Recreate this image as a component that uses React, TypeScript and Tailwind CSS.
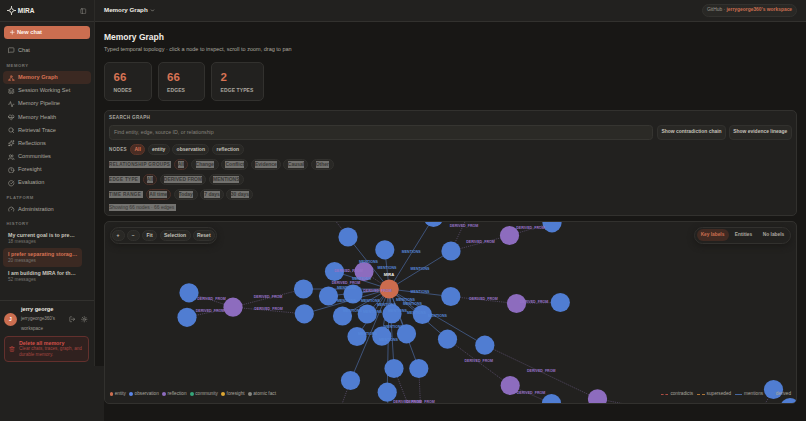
import React from "react";
import {
  Activity, ChevronDown, CircleCheckBig, Clock, Gauge, HeartPulse, Layers, LogOut,
  MessageSquare, PanelLeft, Plus, Search, Sparkles, Sun, Trash2, Users,
} from "lucide-react";

type Pt = [number, number];

function GraphIcon({ className }: { className?: string; strokeWidth?: number }) {
  return (
    <svg viewBox="0 0 24 24" className={className} fill="none" stroke="currentColor" strokeWidth="2.2" strokeLinecap="round">
      <circle cx="12" cy="5" r="3" />
      <circle cx="5" cy="19" r="3" />
      <circle cx="19" cy="19" r="3" />
      <path d="M10.7 8 6.5 16M13.3 8l4.2 8" />
    </svg>
  );
}

const memoryItems = [
  { icon: GraphIcon, label: "Memory Graph", active: true },
  { icon: Layers, label: "Session Working Set" },
  { icon: Activity, label: "Memory Pipeline" },
  { icon: HeartPulse, label: "Memory Health" },
  { icon: Search, label: "Retrieval Trace" },
  { icon: Sparkles, label: "Reflections" },
  { icon: Users, label: "Communities" },
  { icon: Clock, label: "Foresight" },
  { icon: CircleCheckBig, label: "Evaluation" },
];

const history = [
  { title: "My current goal is to pre…", sub: "18 messages" },
  { title: "I prefer separating storag…", sub: "20 messages", active: true },
  { title: "I am building MIRA for th…", sub: "52 messages" },
];

const hub: Pt = [388.7, 288.5];
const blue: Pt[] = [
  [188.5, 292.3], [186.5, 316.8], [347.5, 236.5], [334, 271], [303, 288.5], [303.8, 313.3],
  [328, 295.5], [352.5, 293.5], [384.3, 249.3], [433, 217], [450.5, 250.5], [450.3, 296],
  [342, 315.5], [366.7, 313.5], [391.5, 313.2], [421.8, 314], [356.5, 336], [381.3, 335.7],
  [406, 333.3], [447, 338.7], [484.3, 344.7], [350, 380], [393.5, 368], [418.3, 368],
  [386.7, 391.7], [551.5, 222.3], [559.8, 302], [551, 403], [773, 389], [789.5, 407],
];
const purple: Pt[] = [[363.5, 271], [232.5, 306.7], [509, 235], [516, 303], [509.7, 385], [597, 398.3]];

const derived: [Pt, Pt][] = [
  [[188.5, 292.3], [232.5, 306.7]], [[186.5, 316.8], [232.5, 306.7]],
  [[232.5, 306.7], [303, 288.5]], [[232.5, 306.7], [303.8, 313.3]],
  [[450.5, 250.5], [509, 235]], [[509, 235], [551.5, 222.3]], [[450.5, 250.5], [467, 216]],
  [[450.3, 296], [516, 303]], [[516, 303], [559.8, 302]],
  [[447, 338.7], [509.7, 385]], [[484.3, 344.7], [597, 398.3]], [[509.7, 385], [551, 403]],
  [[597, 398.3], [632, 405]], [[393.5, 368], [408, 405]], [[418.3, 368], [420, 405]],
  [[350, 380], [341, 405]], [[347.5, 236.5], [334, 219]], [[773, 389], [763, 406]],
  [[334, 271], [363.5, 271]], [[352.5, 293.5], [363.5, 271]], [[363.5, 271], [388.7, 288.5]],
];

const derivedLabels: Pt[] = [
  [211, 298], [209.5, 310.5], [267.5, 296.3], [268, 308.7], [463.5, 225.9], [480, 241.2],
  [530, 227.2], [483, 298], [533.5, 301], [478.3, 360.5], [540.7, 370.2], [530.5, 392.5],
  [407, 401.3], [420, 401.3], [345.5, 282.5], [348, 270], [377, 290.7],
];
const mentionLabels: Pt[] = [
  [410.7, 251.4], [419.5, 268], [419.5, 291.2], [386.5, 267.5], [368, 261.7], [361, 278.7],
  [346, 287.7], [370, 300.7], [405, 299.7], [412, 303], [437, 315.4], [386, 304.8], [397, 310.2],
  [372, 311.2], [416, 312.3], [346, 300], [393, 326.7], [367, 333.2], [388, 339], [352, 310.7],
];

function Graph() {
  return (
    <svg className="absolute inset-0 h-full w-full" viewBox="104.5 221.5 691 181" preserveAspectRatio="none">
      <g stroke="#4a68a0" strokeWidth="0.7">
        {blue.slice(2, 25).map(([x, y], i) => (
          <line key={i} x1={hub[0]} y1={hub[1]} x2={x} y2={y} />
        ))}
        <line x1="386.7" y1="391.7" x2="387.4" y2="404" />
      </g>
      <g stroke="#65567c" strokeWidth="0.65" strokeDasharray="1.2 1">
        {derived.map(([a, b], i) => (
          <line key={i} x1={a[0]} y1={a[1]} x2={b[0]} y2={b[1]} />
        ))}
      </g>
      {blue.map(([x, y], i) => <circle key={i} cx={x} cy={y} r="9.6" fill="#507dd2" />)}
      {purple.map(([x, y], i) => <circle key={i} cx={x} cy={y} r="9.6" fill="#8d6cbe" />)}
      <circle cx={hub[0]} cy={hub[1]} r="9.6" fill="#cc6c4e" />
      <g fontFamily="Liberation Sans, Arial, sans-serif" fontSize="3.6" fontWeight="700" textAnchor="middle">
        <g fill="#5585d8">
          {mentionLabels.map(([x, y], i) => <text key={i} x={x} y={y + 1}>MENTIONS</text>)}
        </g>
        <g fill="#9672c6">
          {derivedLabels.map(([x, y], i) => <text key={i} x={x} y={y + 1}>DERIVED_FROM</text>)}
        </g>
        <text x="388.5" y="275" fontSize="4.1" fill="#f2efe8">MIRA</text>
      </g>
    </svg>
  );
}

const chipBase = "flex h-[11px] items-center justify-center rounded-full border text-[5px] font-bold";

function Chip({ w, children, on, sel }: { w: string; children: string; on?: boolean; sel?: boolean }) {
  const tone = on
    ? sel ? "border-[#4b3028] bg-[#2b2320]" : "border-[#5b3529] bg-[#4a2d24] text-[#dc7656]"
    : "border-[#32312e] bg-[#292825] text-[#c4c1ba]";
  return (
    <div className={`${chipBase} ${tone} ${w}`}>
      {sel ? <span className="block h-[7px] bg-[#73726f] leading-[7px] whitespace-nowrap text-[#393836]">{children}</span> : children}
    </div>
  );
}

function RowLabel({ children, w, sel }: { children: string; w: string; sel?: boolean }) {
  return (
    <div className={`shrink-0 text-[4.6px] font-bold tracking-[0.33px] whitespace-nowrap ${w}`}>
      <span className={sel ? "block h-[7px] bg-[#73726f] leading-[7px] text-[#393836]" : "block leading-[6px] text-[#aaa79f]"}>{children}</span>
    </div>
  );
}

function NavItem({ icon: Icon, label, active }: { icon: React.ElementType; label: string; active?: boolean }) {
  return (
    <div className={`flex h-[13.2px] items-center gap-[3.5px] rounded-[4px] pl-[5px] text-[5.65px] ${active ? "bg-[#3b2922] font-bold text-[#d77354]" : "text-[#aaa79f]"}`}>
      <Icon className="h-[6.5px] w-[6.5px]" strokeWidth={2} />
      <span>{label}</span>
    </div>
  );
}

function SideLabel({ children }: { children: string }) {
  return <div className="flex items-center pl-[2.5px] text-[4.2px] font-bold tracking-[0.55px] text-[#777570]">{children}</div>;
}

function Stat({ n, label, w }: { n: string; label: string; w: string }) {
  return (
    <div className={`h-[38.5px] rounded-[5px] border border-[#32312e] bg-[#22211f] pl-[8.5px] pt-[7.5px] ${w}`}>
      <div className="text-[11.5px] leading-[13px] font-bold text-[#d77354]">{n}</div>
      <div className="mt-[3.5px] text-[5px] leading-[6px] font-bold tracking-[0.1px] text-[#aaa79f]">{label}</div>
    </div>
  );
}

function Legend({ color, label }: { color: string; label: string }) {
  return (
    <div className="flex items-center gap-[1.6px]">
      <i className={`h-[3.6px] w-[3.6px] rounded-full ${color}`} />
      <span>{label}</span>
    </div>
  );
}

function Sidebar() {
  return (
    <aside className="flex h-[366px] w-[95px] flex-col border-r border-[#2c2b28] bg-[#22211f]">
      <div className="flex h-[21.5px] shrink-0 items-center border-b border-[#32312e] pl-[7px] pr-[7.5px] pt-[1px]">
        <svg viewBox="0 0 24 24" className="h-[9px] w-[9px]" fill="none" stroke="#e9e5dc" strokeWidth="2.4" strokeLinejoin="round">
          <path d="M12 3.5 14.6 9.4 20.5 12 14.6 14.6 12 20.5 9.4 14.6 3.5 12 9.4 9.4Z" />
          <path d="M12 0v4M12 20v4M0 12h4M20 12h4" />
        </svg>
        <span className="ml-[1.8px] text-[6.5px] font-bold text-[#f0ede6]">MIRA</span>
        <PanelLeft className="ml-auto h-[6.5px] w-[6.5px] text-[#8a8882]" />
      </div>
      <div className="flex min-h-0 flex-1 flex-col px-[4px] pt-[4.5px]">
        <div className="flex h-[13px] w-[86px] shrink-0 items-center rounded-[3.5px] bg-[#cb6e50] pl-[4.5px] text-[5.7px] font-bold text-[#fff4ee]">
          <Plus className="mr-[2px] h-[6.5px] w-[6.5px]" strokeWidth={2.5} />New chat
        </div>
        <div className="mt-[5px] -ml-px"><NavItem icon={MessageSquare} label="Chat" /></div>
        <div className="mt-[5px] flex h-[8px] items-center"><SideLabel>MEMORY</SideLabel></div>
        <div className="mt-[1px] -mx-px">
          {memoryItems.map((m) => <NavItem key={m.label} {...m} />)}
        </div>
        <div className="mt-[4px] flex h-[8px] items-center"><SideLabel>PLATFORM</SideLabel></div>
        <div className="mt-[1px] -ml-px"><NavItem icon={Gauge} label="Administration" /></div>
        <div className="mt-[4px] flex h-[8px] items-center"><SideLabel>HISTORY</SideLabel></div>
        <div className="mt-[1px] -ml-px w-[79px]">
          {history.map((h) => (
            <div key={h.title} className={`flex h-[19px] flex-col justify-center rounded-[4px] pl-[5px] whitespace-nowrap ${h.active ? "bg-[#3b2922]" : ""}`}>
              <div className={`text-[5.3px] leading-[6.5px] font-bold ${h.active ? "text-[#d77354]" : "text-[#c9c6be]"}`}>{h.title}</div>
              <div className="text-[4.7px] leading-[6px] text-[#777570]">{h.sub}</div>
            </div>
          ))}
        </div>
      </div>
      <div className="h-[66px] shrink-0 border-t border-[#32312e] px-[4px] pt-[4px]">
        <div className="flex h-[29px] items-center">
          <div className="flex h-[13px] w-[13px] shrink-0 items-center justify-center rounded-full bg-[#cb6e50] text-[5px] font-bold text-white">J</div>
          <div className="ml-[4px] w-[46px]">
            <div className="text-[5.6px] leading-[9px] font-bold text-[#f0ede6]">jerry george</div>
            <div className="text-[4.6px] leading-[9.7px] text-[#9b9891]">jerrygeorge360's<br />workspace</div>
          </div>
          <LogOut className="ml-[1.5px] h-[6.5px] w-[6.5px] text-[#9b9891]" />
          <Sun className="ml-[6px] h-[6.5px] w-[6.5px] text-[#9b9891]" />
        </div>
        <div className="mt-[2px] flex h-[26px] w-[85px] items-center rounded-[4px] border border-[#63302d] bg-[#30211f] pl-[4px]">
          <Trash2 className="h-[6px] w-[6px] shrink-0 text-[#c8473f]" />
          <div className="ml-[4px] whitespace-nowrap">
            <div className="text-[5.3px] leading-[6.5px] font-bold text-[#d4504a]">Delete all memory</div>
            <div className="text-[4.6px] leading-[6px] text-[#a44640]">Clear chats, traces, graph, and<br />durable memory.</div>
          </div>
        </div>
      </div>
    </aside>
  );
}

export default function App() {
  return (
    <div className="flex h-[421px] w-[806px] overflow-hidden bg-[#181715] font-['Liberation_Sans',Arial,sans-serif] leading-none">
      <div className="w-[95px] shrink-0">
        <Sidebar />
        <div className="h-[55px] w-[104px] bg-[#22211f]" />
      </div>
      <div className="flex w-[711px] flex-col">
        <header className="flex h-[21.5px] shrink-0 items-center border-b border-[#32312e] bg-[#22211f] pl-[9px] pr-[9px]">
          <span className="text-[6.2px] font-bold text-[#f0ede6]">Memory Graph</span>
          <ChevronDown className="ml-[2px] h-[5px] w-[5px] text-[#aaa79f]" strokeWidth={3} />
          <div className="ml-auto flex h-[12.5px] w-[95px] items-center justify-center rounded-full border border-[#32312e] bg-[#292825] text-[4.9px] whitespace-pre text-[#9b9891]">
            GitHub · <b className="text-[#cb6e50]">jerrygeorge360's workspace</b>
          </div>
        </header>
        <main className="pl-[9px]">
          <h1 className="mt-[10px] text-[8.5px] leading-[10px] font-bold text-[#f0ede6]">Memory Graph</h1>
          <p className="mt-[3.5px] text-[5.52px] leading-[8px] text-[#aaa79f]">Typed temporal topology · click a node to inspect, scroll to zoom, drag to pan</p>
          <div className="mt-[9px] flex gap-[6px]">
            <Stat n="66" label="NODES" w="w-[47.5px]" />
            <Stat n="66" label="EDGES" w="w-[47.5px]" />
            <Stat n="2" label="EDGE TYPES" w="w-[52.5px]" />
          </div>
          <section className="mt-[9px] h-[106px] w-[693px] rounded-[5px] border border-[#32312e] bg-[#22211f] pl-[4px] pt-[4.5px]">
            <RowLabel w="w-[60px]">SEARCH GRAPH</RowLabel>
            <div className="mt-[4px] flex h-[15px] text-[4.95px]">
              <div className="flex w-[544px] items-center rounded-[3.5px] border border-[#363531] bg-[#2b2a26] pl-[4px] text-[5.25px] text-[#85827c]">Find entity, edge, source ID, or relationship</div>
              <div className="ml-[4px] flex w-[69px] items-center justify-center rounded-[4px] border border-[#32312e] bg-[#292825] font-bold whitespace-nowrap text-[#c4c1ba]">Show contradiction chain</div>
              <div className="ml-[2.5px] flex w-[63.5px] items-center justify-center rounded-[4px] border border-[#32312e] bg-[#292825] font-bold whitespace-nowrap text-[#c4c1ba]">Show evidence lineage</div>
            </div>
            <div className="mt-[4px] flex items-center gap-[2.6px]">
              <RowLabel w="w-[18.5px]">NODES</RowLabel>
              <Chip w="w-[15px]" on>All</Chip><Chip w="w-[22px]">entity</Chip><Chip w="w-[37px]">observation</Chip><Chip w="w-[32px]">reflection</Chip>
            </div>
            <div className="mt-[4px] flex items-center gap-[2.6px]">
              <RowLabel w="w-[62px]" sel>RELATIONSHIP GROUPS</RowLabel>
              <Chip w="w-[14.5px]" on sel>All</Chip><Chip w="w-[28px]" sel>Change</Chip><Chip w="w-[27px]" sel>Conflict</Chip><Chip w="w-[30px]" sel>Evidence</Chip><Chip w="w-[25px]" sel>Causal</Chip><Chip w="w-[22.5px]" sel>Other</Chip>
            </div>
            <div className="mt-[4px] flex items-center gap-[2.6px]">
              <RowLabel w="w-[31px]" sel>EDGE TYPE</RowLabel>
              <Chip w="w-[14.5px]" on sel>All</Chip><Chip w="w-[46.5px]" sel>DERIVED FROM</Chip><Chip w="w-[35px]" sel>MENTIONS</Chip>
            </div>
            <div className="mt-[4px] flex items-center gap-[2.6px]">
              <RowLabel w="w-[34px]" sel>TIME RANGE</RowLabel>
              <Chip w="w-[25.5px]" on sel>All time</Chip><Chip w="w-[24px]" sel>Today</Chip><Chip w="w-[23.5px]" sel>7 days</Chip><Chip w="w-[27px]" sel>30 days</Chip>
            </div>
            <div className="mt-[4px] h-[7px] w-[67px] bg-[#73726f] text-[4.95px] leading-[7px] whitespace-nowrap text-[#393836]">Showing 66 nodes · 66 edges</div>
          </section>
          <section className="relative mt-[5px] h-[183px] w-[693px] overflow-hidden rounded-[5px] border border-[#32312e] bg-[#22211f]">
            <Graph />
            <div className="absolute top-[5.5px] left-[4.5px] flex h-[16.5px] w-[107px] items-center gap-[2.2px] rounded-full border border-[#32312e] bg-[#22211f] pl-[1px] shadow-[0_2px_6px_#1a1917]">
              <Chip w="w-[13px]">+</Chip><Chip w="w-[13px]">−</Chip><Chip w="w-[15.5px]">Fit</Chip><Chip w="w-[31px]">Selection</Chip><Chip w="w-[22px]">Reset</Chip>
            </div>
            <div className="absolute top-[5.5px] right-[5px] flex h-[16.5px] w-[97px] items-center rounded-full border border-[#32312e] bg-[#22211f] pl-[1.5px] text-[4.8px] font-bold text-[#aaa79f] shadow-[0_2px_6px_#1a1917]">
              <div className="flex h-[12px] w-[32px] items-center justify-center rounded-full bg-[#412a22] text-[#cb6e50]">Key labels</div>
              <div className="w-[30px] text-center">Entities</div>
              <div className="w-[30px] text-center">No labels</div>
            </div>
            <div className="absolute bottom-[5.5px] left-[4.5px] flex gap-[3.5px] text-[4.7px] leading-[6px] whitespace-nowrap text-[#aaa79f]">
              <Legend color="bg-[#cb6e50]" label="entity" />
              <Legend color="bg-[#5b86e8]" label="observation" />
              <Legend color="bg-[#8d6cbe]" label="reflection" />
              <Legend color="bg-[#35a579]" label="community" />
              <Legend color="bg-[#dda733]" label="foresight" />
              <Legend color="bg-[#888780]" label="atomic fact" />
            </div>
            <div className="absolute right-[5px] bottom-[5.5px] flex items-center text-[4.7px] leading-[6px] whitespace-nowrap text-[#aaa79f]">
              <i className="mr-[2px] w-[7.5px] border-t border-dashed border-[#ae4c42]" />contradicts
              <i className="mr-[2px] ml-[4px] w-[7.5px] border-t border-dashed border-[#ad7435]" />superseded
              <i className="mr-[2px] ml-[4px] w-[7px] border-t border-[#45669f]" />mentions
              <span className="ml-[12.5px]">derived</span>
            </div>
          </section>
        </main>
      </div>
    </div>
  );
}
